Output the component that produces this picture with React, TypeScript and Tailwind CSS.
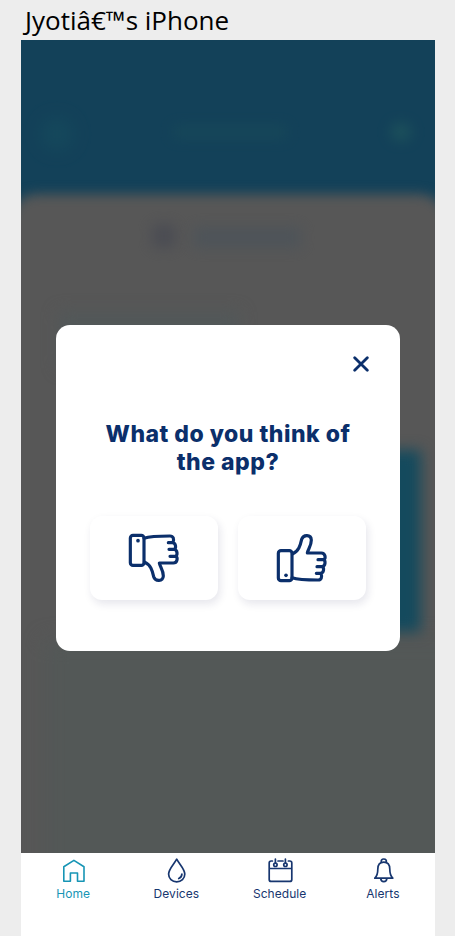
import React from "react";

type IconProps = { className?: string };

function Thumb({ className = "" }: IconProps) {
  return (
    <svg viewBox="144 82 156 150" className={`h-[50px] w-[52px] ${className}`} fill="none" stroke="#0b2f6b" strokeWidth="9.5" strokeLinecap="round" strokeLinejoin="round">
      <rect x="151" y="89" width="41" height="90" rx="8" />
      <circle cx="174" cy="105" r="5.5" fill="#0b2f6b" stroke="none" />
      <path d="M192 98C212 91 236 91 270 91C280 91 283 100 279 111M265 111H278C288 113 289 127 283 131M267 131H283C293 134 293 148 287 152M270 152H288C294 157 292 172 280 172H238C240 184 250 193 250 211C249 228 226 228 221 213C217 195 212 177 193 169" />
    </svg>
  );
}

function HomeIcon() {
  return (
    <svg viewBox="0 0 26 26" className="size-[26px]" fill="none" stroke="currentColor" strokeWidth="1.6" strokeLinejoin="round">
      <path d="M2.8 23.3V8.8L12.9 2.4L23 8.8V23.3H16.5V15H9.4V23.3Z" />
    </svg>
  );
}

function DropIcon() {
  return (
    <svg viewBox="0 0 26 26" className="size-[26px]" fill="none" stroke="currentColor" strokeWidth="1.7" strokeLinecap="round" strokeLinejoin="round">
      <path d="M12.7 1.2C10 6.2 4.6 11.2 4.6 16.1C4.6 20.6 8.1 23.8 12.7 23.8S20.8 20.6 20.8 16.1C20.8 11.2 15.4 6.2 12.7 1.2Z" />
      <path d="M17.9 16.1C17.8 18.2 16.5 19.8 14.7 20.5" />
    </svg>
  );
}

function CalendarIcon() {
  return (
    <svg viewBox="0 0 26 26" className="size-[26px]" fill="none" stroke="currentColor" strokeWidth="1.7" strokeLinecap="round" strokeLinejoin="round">
      <path d="M5.4 3H4.2Q2.2 3 2.2 5V21.4Q2.2 23.4 4.2 23.4H22.8Q24.8 23.4 24.8 21.4V5Q24.8 3 22.8 3H21.4M11 3H16M2.2 10.5H24.8M8.4 1.2V5M18.4 1.2V5" />
      <circle cx="8.4" cy="6.8" r="1.7" />
      <circle cx="18.4" cy="6.8" r="1.7" />
    </svg>
  );
}

function BellIcon() {
  return (
    <svg viewBox="0 0 26 26" className="size-[26px]" fill="none" stroke="currentColor" strokeWidth="1.7" strokeLinecap="round" strokeLinejoin="round">
      <path d="M11.4 4.3C10.7 2.5 11.8 1 13.8 1S16.9 2.5 16.2 4.3M4.8 20.2C7 18.2 7.8 16.2 7.8 11.3C7.8 6.8 10.2 4.2 13.8 4.2S19.8 6.8 19.8 11.3C19.8 16.2 20.6 18.2 22.8 20.2ZM10.7 20.4C11.1 24.8 16.5 24.8 16.9 20.4" />
    </svg>
  );
}

const tabs = [
  { label: "Home", icon: <HomeIcon />, color: "text-[#1795b5]" },
  { label: "Devices", icon: <DropIcon />, color: "text-[#17366f]" },
  { label: "Schedule", icon: <CalendarIcon />, color: "text-[#17366f]" },
  { label: "Alerts", icon: <BellIcon />, color: "text-[#17366f]" },
];

function Backdrop() {
  return (
    <div className="absolute inset-0 overflow-hidden bg-[#134159]">
      <div className="absolute top-[78px] left-[20px] h-8 w-8 rounded-full bg-[#18505f] opacity-50 blur-[9px]" />
      <div className="absolute top-[86px] left-[152px] h-3 w-[114px] bg-[#1d5159] opacity-45 blur-[7px]" />
      <div className="absolute top-[84px] left-[370px] h-4 w-5 rounded-full bg-[#26605e] opacity-60 blur-[7px]" />
      <div className="absolute -inset-x-3 top-[154px] -bottom-6 rounded-t-[28px] bg-[#575757] blur-[6px]" />
      <div className="absolute top-[272px] left-[38px] h-14 w-[180px] bg-[#525859] blur-[8px]" />
      <div className="absolute top-[600px] left-[24px] -right-6 -bottom-6 bg-[#535857] blur-[10px]" />
      <div className="absolute top-[184px] left-[131px] h-6 w-6 rounded-md bg-[#474952] opacity-75 blur-[7px]" />
      <div className="absolute top-[187px] left-[172px] h-[21px] w-[108px] bg-[#4b535a] opacity-75 blur-[7px]" />
      <div className="absolute top-[410px] left-[60px] h-[182px] w-[340px] bg-[#144a5d] blur-[7px]" />
    </div>
  );
}

function FeedbackDialog() {
  return (
    <section className="relative mx-auto mt-[285px] h-[326px] w-[344px] rounded-[14px] bg-white px-[34px] pt-[31px]">
      <div className="flex justify-end">
        <button aria-label="Close" className="-mr-[3px] size-4">
          <svg viewBox="0 0 16 16" className="size-4" fill="none" stroke="#0b2f6b" strokeWidth="2.8" strokeLinecap="round">
            <path d="M1.7 1.7L14.3 14.3M14.3 1.7L1.7 14.3" />
          </svg>
        </button>
      </div>
      <h1 className="mt-[49px] text-center text-[23px] leading-[27.5px] font-extrabold tracking-[0.5px] text-[#0b2f6b]">
        What do you think of
        <br />
        the app?
      </h1>
      <div className="mt-[40px] flex gap-5">
        <button aria-label="Thumbs down" className="flex h-[84px] w-32 items-center justify-center rounded-[12px] bg-white shadow-[2px_4px_9px_rgba(30,30,80,0.11)]">
          <Thumb />
        </button>
        <button aria-label="Thumbs up" className="flex h-[84px] w-32 items-center justify-center rounded-[12px] bg-white shadow-[2px_4px_9px_rgba(30,30,80,0.11)]">
          <Thumb className="-scale-y-100" />
        </button>
      </div>
    </section>
  );
}

export default function App() {
  return (
    <div className="flex h-[936px] w-[455px] flex-col overflow-hidden bg-[#ededed] font-[Inter,sans-serif]">
      <header className="h-10 shrink-0 pl-[25px] font-['Open_Sans',sans-serif] text-[26px] leading-[40px] whitespace-nowrap text-black">
        Jyotiâ€™s iPhone
      </header>
      <main className="ml-[21px] flex w-[414px] flex-1 flex-col">
        <div className="relative h-[813px] shrink-0">
          <Backdrop />
          <div className="flow-root">
            <FeedbackDialog />
          </div>
        </div>
        <nav className="grid flex-1 grid-cols-4 bg-white pt-[5px] pl-px">
          {tabs.map((tab) => (
            <a key={tab.label} className={`flex flex-col items-center ${tab.color}`}>
              {tab.icon}
              <span className="mt-[2px] -ml-px text-[12px] leading-4 tracking-[0.05px]">{tab.label}</span>
            </a>
          ))}
        </nav>
      </main>
    </div>
  );
}
